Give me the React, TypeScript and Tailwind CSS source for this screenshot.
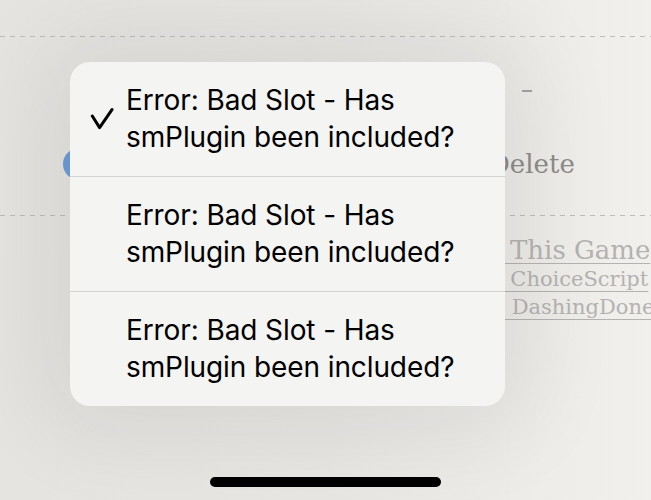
import React from "react";

const items = [
  { id: 1, label: ["Error: Bad Slot - Has", "smPlugin been included?"], checked: true },
  { id: 2, label: ["Error: Bad Slot - Has", "smPlugin been included?"], checked: false },
  { id: 3, label: ["Error: Bad Slot - Has", "smPlugin been included?"], checked: false },
];

function Dashed({ className }: { className?: string }) {
  return (
    <div
      className={`h-px w-full bg-[repeating-linear-gradient(90deg,#bdbcba_0px,#bdbcba_5px,transparent_5px,transparent_10px)] ${className ?? ""}`}
    />
  );
}

function Check() {
  return (
    <svg width="24" height="24" viewBox="0 0 24 24" fill="none" className="-ml-[2px]">
      <path d="M2.3 9 L9.6 20.6 L22 2.6" stroke="#000" strokeWidth="3" strokeLinecap="round" strokeLinejoin="round" />
    </svg>
  );
}

export default function App() {
  return (
    <div className="relative h-[500px] w-[651px] overflow-hidden bg-gradient-to-r from-[#e6e4e1] via-[#e8e6e3] to-[#f1f0ed]">
      {/* page behind the menu */}
      <div className="pt-[36px]">
        <Dashed />
        <div className="ml-[522px] mt-[53px] h-[2px] w-[10px] bg-[#a3a3a3]" />
        <div className="mt-[56px] flex h-8 items-center">
          <div className="ml-[63px] h-8 w-8 rounded-full bg-[#6f9cd8]" />
          <span className="ml-[394px] whitespace-nowrap font-['DejaVu_Serif',serif] text-[26px] leading-8 text-[#8d8c8a]">
            Delete
          </span>
        </div>
        <Dashed className="mt-[35px]" />
        <div className="mt-[20px] whitespace-nowrap font-['DejaVu_Serif',serif] text-[#b4b3b1]">
          <div className="ml-[445px] text-[26px] leading-[29px] underline decoration-1 underline-offset-[4px]">Like This Game</div>
          <div className="ml-[457px] text-[21px] leading-[28px] underline decoration-1 underline-offset-[5px]">with ChoiceScript</div>
          <div className="ml-[484px] text-[21px] leading-[28px] underline decoration-1 underline-offset-[5px]">at DashingDone</div>
        </div>
      </div>

      {/* context menu */}
      <div className="absolute left-[70px] top-[62px] w-[435px] overflow-hidden rounded-[20px] bg-[#f4f4f3] shadow-[0_0_90px_30px_rgba(0,0,0,0.07)]">
        {items.map((item, i) => (
          <div key={item.id} className={i > 0 ? "border-t border-[#d3d3d2]" : ""}>
            <div className="flex items-center py-5 pl-[22px]">
              <div className="w-[34px] shrink-0">{item.checked && <Check />}</div>
              <div className="font-['Inter',sans-serif] text-[28px] leading-[37px] tracking-[-0.1px] text-black">
                <div>{item.label[0]}</div>
                <div>{item.label[1]}</div>
              </div>
            </div>
          </div>
        ))}
      </div>

      {/* home indicator */}
      <div className="absolute left-[210px] top-[477px] h-[10px] w-[231px] rounded-full bg-black" />
    </div>
  );
}
